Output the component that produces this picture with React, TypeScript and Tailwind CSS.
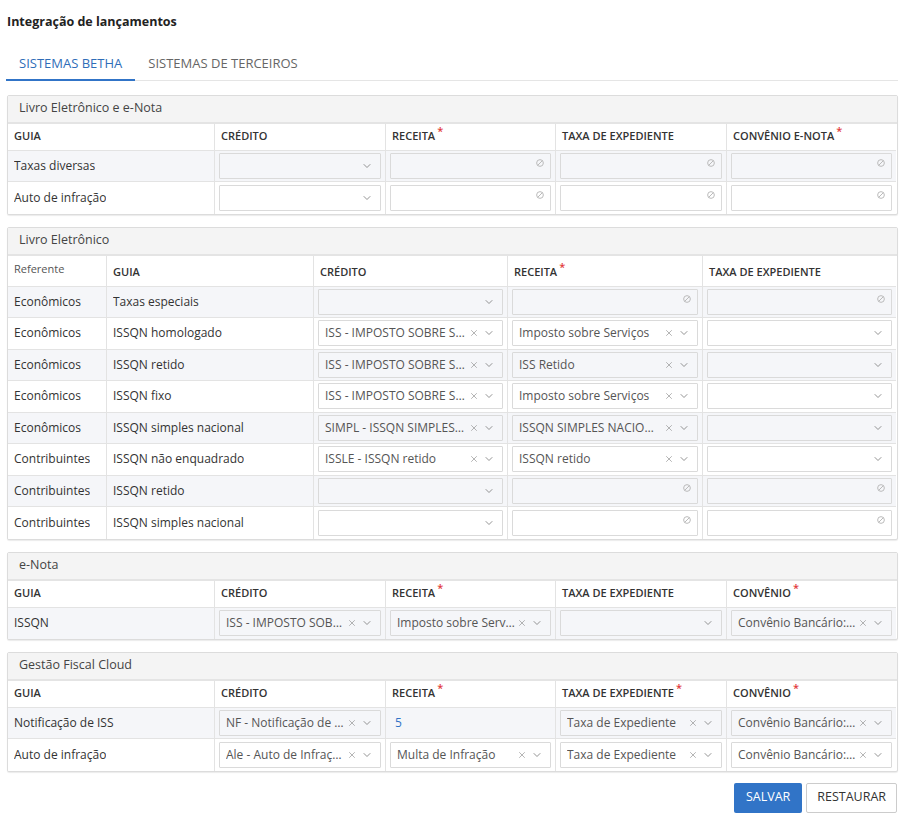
import React from "react";
import {ChevronDown, X} from "lucide-react";

type Cell =
    | {kind: "select"; value?: string}
    | {kind: "lock"}
    | {kind: "text"; value: string};

interface Col {
    label: string;
    required?: boolean;
}

interface Row {
    labels: string[];
    cells: Cell[];
}

const sel = (value?: string): Cell => ({kind: "select", value});
const lock: Cell = {kind: "lock"};

// small "not allowed" mark drawn in the corner of locked inputs
const Blocked = () => (
    <svg width="8" height="8" viewBox="0 0 10 10" className="absolute right-[6px] top-[5px]">
        <circle cx="5" cy="5" r="4.2" fill="none" stroke="#b8b8b8" strokeWidth="1.2" />
        <line x1="2.2" y1="7.8" x2="7.8" y2="2.2" stroke="#b8b8b8" strokeWidth="1.2" />
    </svg>
);

function Field({cell}: {cell: Cell}) {
    if (cell.kind === "text") {
        return <span className="px-[5px] text-[12px] text-[#3174c7]">{cell.value}</span>;
    }
    if (cell.kind === "lock") {
        return (
            <div className="relative h-[26px] w-full rounded-[1px] border border-[#dadada]">
                <Blocked />
            </div>
        );
    }
    return (
        <div className="flex h-[26px] w-full items-center rounded-[1px] border border-[#dadada] pl-[6px] pr-[7px]">
            <span className="flex-1 truncate text-[12px] text-[#555]">{cell.value ?? ""}</span>
            {cell.value && <X size={10} strokeWidth={1.5} className="ml-[2px] shrink-0 text-[#888]" />}
            <ChevronDown size={12} strokeWidth={1.6} className="ml-[4px] shrink-0 text-[#777]" />
        </div>
    );
}

function Panel({
    title,
    cols,
    widths,
    rows,
    tallHead,
}: {
    title: string;
    cols: Col[];
    widths: string;
    rows: Row[];
    tallHead?: boolean;
}) {
    const nLabels = rows[0].labels.length;
    return (
        <div className="overflow-hidden rounded-[2px] border border-[#dcdcdc] bg-white shadow-[0_1px_1px_rgba(0,0,0,0.08)]">
            <div className="flex h-[28px] items-center border-b-2 border-[#e4e4e4] bg-[#f4f4f4] px-[11px] text-[12.5px] text-[#444]">
                {title}
            </div>
            <div className={`grid ${widths}`}>
                {cols.map((c, i) => (
                    <div
                        key={c.label}
                        className={`flex border-b border-[#e3e3e3] px-[6px] ${i < cols.length - 1 ? "border-r" : ""} ${
                            tallHead ? "h-[31px] items-end pb-[5px]" : "h-[27px] items-center"
                        }`}
                    >
                        {c.label === "Referente" ? (
                            <span className="mb-[3px] text-[11px] text-[#555]">{c.label}</span>
                        ) : (
                            <span className="text-[11px] font-semibold text-[#333]">
                                {c.label}
                                {c.required && <sup className="ml-[2px] text-[11px] text-[#e23b3b]">*</sup>}
                            </span>
                        )}
                    </div>
                ))}
                {rows.map((r, ri) => {
                    const bg = ri % 2 === 0 ? "bg-[#f5f6f9]" : "bg-white";
                    const h = ri % 2 === 0 ? "h-[31px]" : "h-[32px]";
                    const last = ri === rows.length - 1;
                    const all = [...r.labels.map((l) => ({l})), ...r.cells.map((c) => ({c}))];
                    return all.map((item, ci) => (
                        <div
                            key={`${ri}-${ci}`}
                            className={`flex ${h} items-center ${bg} ${last ? "" : "border-b"} border-[#e3e3e3] ${
                                ci < all.length - 1 ? "border-r" : ""
                            } ${ci < nLabels ? "px-[6px]" : "px-[4px]"}`}
                        >
                            {"l" in item ? (
                                <span className="truncate text-[12px] text-[#333]">{item.l}</span>
                            ) : (
                                <Field cell={item.c as Cell} />
                            )}
                        </div>
                    ));
                })}
            </div>
        </div>
    );
}

export default function App() {
    const five = "grid-cols-[207px_171px_170px_171px_169px]";
    return (
        <div
            className="min-h-screen bg-white px-[6px] pt-[13px] text-[#333]"
            style={{fontFamily: '"Open Sans", "Liberation Sans", sans-serif'}}
        >
            <h1 className="pl-[1px] text-[12.5px] font-bold leading-[18px] text-[#222]">Integração de lançamentos</h1>
            <div className="mt-[23px] flex border-b border-[#e5e5e5]">
                <div className="-mb-px border-b-2 border-[#3174c7] px-[13px] pb-[5px] text-[13px] text-[#2f6db8]">
                    SISTEMAS BETHA
                </div>
                <div className="px-[13px] pb-[5px] text-[13px] text-[#666]">SISTEMAS DE TERCEIROS</div>
            </div>

            <div className="mt-[14px] flex flex-col gap-[12px] pl-[1px]">
                <Panel
                    title="Livro Eletrônico e e-Nota"
                    widths={five}
                    cols={[
                        {label: "GUIA"},
                        {label: "CRÉDITO"},
                        {label: "RECEITA", required: true},
                        {label: "TAXA DE EXPEDIENTE"},
                        {label: "CONVÊNIO E-NOTA", required: true},
                    ]}
                    rows={[
                        {labels: ["Taxas diversas"], cells: [sel(), lock, lock, lock]},
                        {labels: ["Auto de infração"], cells: [sel(), lock, lock, lock]},
                    ]}
                />

                <Panel
                    title="Livro Eletrônico"
                    widths="grid-cols-[99px_207px_194px_195px_193px]"
                    tallHead
                    cols={[
                        {label: "Referente"},
                        {label: "GUIA"},
                        {label: "CRÉDITO"},
                        {label: "RECEITA", required: true},
                        {label: "TAXA DE EXPEDIENTE"},
                    ]}
                    rows={[
                        {labels: ["Econômicos", "Taxas especiais"], cells: [sel(), lock, lock]},
                        {
                            labels: ["Econômicos", "ISSQN homologado"],
                            cells: [sel("ISS - IMPOSTO SOBRE SERVIÇOS"), sel("Imposto sobre Serviços"), sel()],
                        },
                        {
                            labels: ["Econômicos", "ISSQN retido"],
                            cells: [sel("ISS - IMPOSTO SOBRE SERVIÇOS"), sel("ISS Retido"), sel()],
                        },
                        {
                            labels: ["Econômicos", "ISSQN fixo"],
                            cells: [sel("ISS - IMPOSTO SOBRE SERVIÇOS"), sel("Imposto sobre Serviços"), sel()],
                        },
                        {
                            labels: ["Econômicos", "ISSQN simples nacional"],
                            cells: [sel("SIMPL - ISSQN SIMPLES NACIONAL"), sel("ISSQN SIMPLES NACIONAL"), sel()],
                        },
                        {
                            labels: ["Contribuintes", "ISSQN não enquadrado"],
                            cells: [sel("ISSLE - ISSQN retido"), sel("ISSQN retido"), sel()],
                        },
                        {labels: ["Contribuintes", "ISSQN retido"], cells: [sel(), lock, lock]},
                        {labels: ["Contribuintes", "ISSQN simples nacional"], cells: [sel(), lock, lock]},
                    ]}
                />

                <Panel
                    title="e-Nota"
                    widths={five}
                    cols={[
                        {label: "GUIA"},
                        {label: "CRÉDITO"},
                        {label: "RECEITA", required: true},
                        {label: "TAXA DE EXPEDIENTE"},
                        {label: "CONVÊNIO", required: true},
                    ]}
                    rows={[
                        {
                            labels: ["ISSQN"],
                            cells: [
                                sel("ISS - IMPOSTO SOBRE SERVIÇOS"),
                                sel("Imposto sobre Serviços"),
                                sel(),
                                sel("Convênio Bancário: 1"),
                            ],
                        },
                    ]}
                />

                <Panel
                    title="Gestão Fiscal Cloud"
                    widths={five}
                    cols={[
                        {label: "GUIA"},
                        {label: "CRÉDITO"},
                        {label: "RECEITA", required: true},
                        {label: "TAXA DE EXPEDIENTE", required: true},
                        {label: "CONVÊNIO", required: true},
                    ]}
                    rows={[
                        {
                            labels: ["Notificação de ISS"],
                            cells: [
                                sel("NF - Notificação de Lançamento"),
                                {kind: "text", value: "5"},
                                sel("Taxa de Expediente"),
                                sel("Convênio Bancário: 1"),
                            ],
                        },
                        {
                            labels: ["Auto de infração"],
                            cells: [
                                sel("Ale - Auto de Infração"),
                                sel("Multa de Infração"),
                                sel("Taxa de Expediente"),
                                sel("Convênio Bancário: 1"),
                            ],
                        },
                    ]}
                />
            </div>

            <div className="mt-[11px] flex justify-end gap-[4px] pr-[1px]">
                <button className="h-[30px] rounded-[2px] bg-[#3174c7] px-[12px] text-[12.5px] text-white">SALVAR</button>
                <button className="h-[30px] rounded-[2px] border border-[#cccccc] bg-white px-[10px] text-[12.5px] text-[#333]">
                    RESTAURAR
                </button>
            </div>
        </div>
    );
}
